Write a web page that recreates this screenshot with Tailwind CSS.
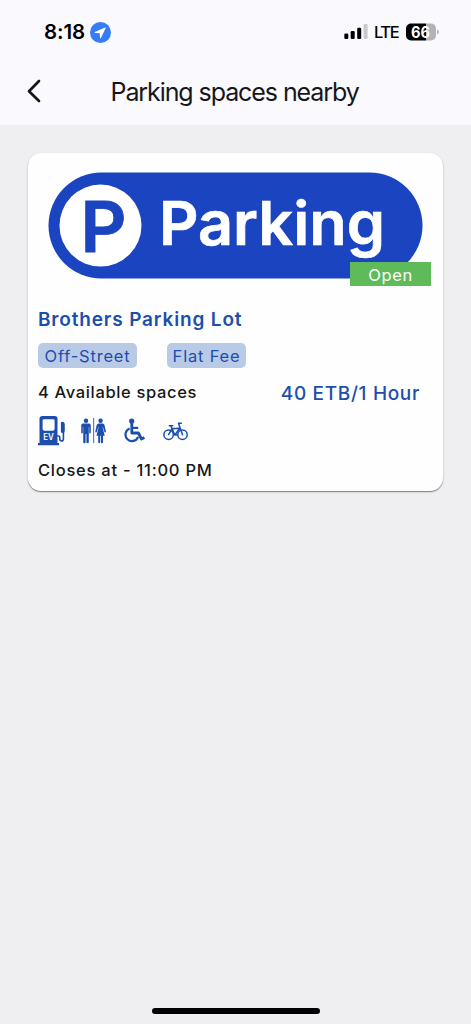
<!DOCTYPE html>
<html lang="en">
<head>
<meta charset="utf-8">
<title>Parking spaces nearby</title>
<script src="https://cdn.jsdelivr.net/npm/@tailwindcss/browser@4"></script>
</head>
<body class="bg-[#efeff1] font-['Inter',sans-serif] text-[#17171a]">
<div class="flex h-[1024px] w-[471px] flex-col overflow-hidden">
  <header class="h-[125px] bg-[#faf9fe]">
    <div class="flex h-16 items-center justify-between pl-11 pr-[32px] text-black">
      <div class="flex items-center gap-[5px]">
        <span class="w-[41px] whitespace-nowrap text-[20.500px] font-semibold leading-6 tracking-[-0.1px]">8:18</span>
        <svg class="size-[21px]" viewBox="0 0 21 21"><circle cx="10.500" cy="10.500" r="10.500" fill="#367cf6"/><path d="M15.200 5.500 4.800 10.100Q4.300 10.800 5 10.900L9.700 11.200 10 15.900Q10.300 16.700 10.900 15.900L15.800 6.100Q16 5.200 15.200 5.500Z" fill="#fff"/></svg>
      </div>
      <div class="flex items-center">
        <svg class="h-4 w-6" viewBox="0 0 24 16"><rect x=".3" y="9.500" width="4" height="5.500" rx="1.200"/><rect x="6.700" y="7" width="4" height="8" rx="1.200"/><rect x="13.200" y="3.700" width="4" height="11.300" rx="1.200"/><rect x="19.600" y="0" width="4" height="15" rx="1.200" fill="#c9c8cd"/></svg>
        <span class="ml-[6px] w-[32px] whitespace-nowrap text-[16.500px] font-medium tracking-[-1.4px]">LTE</span>
        <svg class="h-[18px] w-[33px]" viewBox="0 0 33 18"><defs><clipPath id="battery"><rect y=".5" width="30" height="17" rx="5"/></clipPath></defs><g clip-path="url(#battery)"><path d="M0 0h20v18H0z"/><path d="M20 0h10v18H20z" fill="#b3b2b6"/></g><path d="M31 6.500q2 .8 2 2.500t-2 2.500z" fill="#b3b2b6"/><text x="14.600" y="14.600" text-anchor="middle" font-size="15.500" font-weight="700" fill="#fff" textLength="19" lengthAdjust="spacingAndGlyphs">66</text></svg>
      </div>
    </div>
    <div class="flex h-[56px] items-center pl-[26px]">
      <svg class="-mt-[2px] h-6 w-4" viewBox="0 0 16 24" fill="none" stroke="#17171a" stroke-width="2.700" stroke-linecap="round" stroke-linejoin="round"><path d="M13 2 3 12.200 13 22"/></svg>
      <h1 class="ml-[68.500px] mt-[2px] whitespace-nowrap text-[25px] tracking-[-1.08px]">Parking spaces nearby</h1>
    </div>
  </header>

  <main class="px-7 pt-7">
    <article class="h-[338px] w-[415px] rounded-[13px] bg-[#fefefe] pt-[19px] shadow-[0_1px_1px_rgba(0,0,0,0.4),0_1px_3px_rgba(0,0,0,0.12)]">
      <div class="relative h-[119px] pl-5">
        <svg class="h-[108px] w-[376px]" viewBox="0 0 376 108"><rect x=".5" y=".5" width="374" height="106" rx="53" fill="#1b44c1"/><circle cx="52.500" cy="53.600" r="41" fill="#fff"/><text x="32.500" y="79.500" font-size="70" font-weight="600" fill="#1b44c1" stroke="#1b44c1" stroke-width=".8" textLength="46" lengthAdjust="spacingAndGlyphs">P</text><text x="111" y="73" font-size="61" font-weight="600" fill="#fff" stroke="#fff" stroke-width=".7" textLength="226" lengthAdjust="spacingAndGlyphs">Parking</text></svg>
        <div class="absolute left-[322px] top-[90px] flex h-6 w-[81px] items-center justify-center bg-[#5fba59] pt-[2px] text-[16.500px] tracking-[0.6px] text-white">Open</div>
      </div>
      <div class="pl-[10px] pr-[23px]">
        <h2 class="mt-[17px] h-6 whitespace-nowrap text-[19px] font-semibold leading-6 tracking-[0.84px] text-[#1c4ead]">Brothers Parking Lot</h2>
        <div class="mt-[11px] flex gap-[30px] text-[16.500px] tracking-[0.8px] text-[#1c4ead]">
          <span class="flex h-[25px] w-[99px] items-center justify-center whitespace-nowrap rounded-[5px] bg-[#b8cae6] pt-[2px]">Off-Street</span>
          <span class="flex h-[25px] w-[79px] items-center justify-center whitespace-nowrap rounded-[5px] bg-[#b8cae6] pt-[2px]">Flat Fee</span>
        </div>
        <div class="mt-3 flex h-6 items-center justify-between whitespace-nowrap">
          <span class="text-[16.500px] font-medium tracking-[0.65px]">4 Available spaces</span>
          <span class="mt-[5px] text-[19px] font-medium tracking-[0.67px] text-[#1c4ead]">40 ETB/1 Hour</span>
        </div>
        <div class="mt-3 flex h-[30px] text-[#1c4ead]">
          <svg class="h-[30px] w-7" viewBox="0 0 28 30" fill="currentColor"><path fill-rule="evenodd" d="M4.500 0h12.300Q19.500 0 19.500 2.700V27H21v2.300H0V27h1.500V2.700Q1.500 0 4.500 0ZM6 3.300Q4.600 3.300 4.600 4.700V13Q4.600 14.800 6.300 14.800h8.600q1.700 0 1.700-1.700V4.700Q16.600 3.300 15.200 3.300Z"/><path d="M22.900 9V6.700q0-1 1.300-1 2.600.2 2.600 2.800V15q0 2-2.100 2-1.800 0-1.800-1.500Z"/><path d="M19 20h1.500q1.300 0 1.300 1.300v1.800q0 1.800 1.700 1.800 1.900 0 1.900-2V16" fill="none" stroke="currentColor" stroke-width="1.600"/><text x="10.600" y="24.200" text-anchor="middle" font-size="8.500" font-weight="700" fill="#e7eefa" textLength="10.500" lengthAdjust="spacingAndGlyphs">EV</text></svg>
          <svg class="ml-[15px] mt-[2px] h-[26px] w-[25px]" viewBox="0 0 25 26" fill="currentColor"><circle cx="5" cy="2.700" r="2.200"/><path d="M2 5.500h6q1.800 0 1.800 2v7q0 .9-.8.900t-.8-.9V9h-.4v15.200q0 1-1.200 1t-1.200-1V16h-.8v8.200q0 1-1.200 1t-1.200-1V9h-.4v5.500q0 .9-.8.900t-.8-.9v-7q0-2 1.800-2Z"/><path d="M12 0h1.200v25.300H12z" opacity=".7"/><circle cx="19.600" cy="2.700" r="2.200"/><path d="M17.500 5.500h4.200q1.400 0 1.800 1.500l1.400 6.500q.1 1-.7 1.100-.7 0-.9-.8L22 9.200h-.4l2.100 8.600H22v6.400q0 1-1 1t-1-1v-6.400h-.8v6.400q0 1-1 1t-1-1v-6.400h-1.700l2.100-8.600h-.4l-1.300 4.600q-.2.800-.9.800-.8-.1-.7-1.100l1.400-6.500q.4-1.500 1.800-1.500Z"/></svg>
          <svg class="ml-[18px] mt-[2px] h-[25px] w-[22px]" viewBox="0 0 22 25" fill="none" stroke="currentColor" stroke-width="2.200"><circle cx="7.700" cy="3" r="2.600" fill="currentColor" stroke="none"/><path d="M7.800 5v10h6.600l3.100 6 2.900-1.400" stroke-width="2.800" stroke-linejoin="round"/><path d="M8 9.900h6.200"/><path d="M5.600 10.500a6.500 6.500 0 1 0 8.500 8.300" stroke-width="2.200"/></svg>
          <svg class="ml-[17px] mt-[6px] h-[19px] w-[26px]" viewBox="0 0 26 19" fill="none" stroke="currentColor" stroke-width="1.500" stroke-linecap="round" stroke-linejoin="round"><circle cx="5.600" cy="12.700" r="4.700"/><circle cx="19.500" cy="12.700" r="4.700"/><path d="M5.600 12.700 9.200 6.500h7.500L11.800 13 7.800 3.800M6.300 3.700h3.300M19.500 12.700 15.500 1.200h2.800M11.800 13h2.500M9.200 6.700l7-.5" /></svg>
        </div>
        <p class="mt-3 h-6 whitespace-nowrap text-[16.500px] font-medium leading-6 tracking-[0.75px]">Closes at - 11:00 PM</p>
      </div>
    </article>
  </main>
  <div class="mb-[10px] ml-[152px] mt-auto h-[6px] w-[168px] rounded-full bg-black"></div>
</div>
</body>
</html>
